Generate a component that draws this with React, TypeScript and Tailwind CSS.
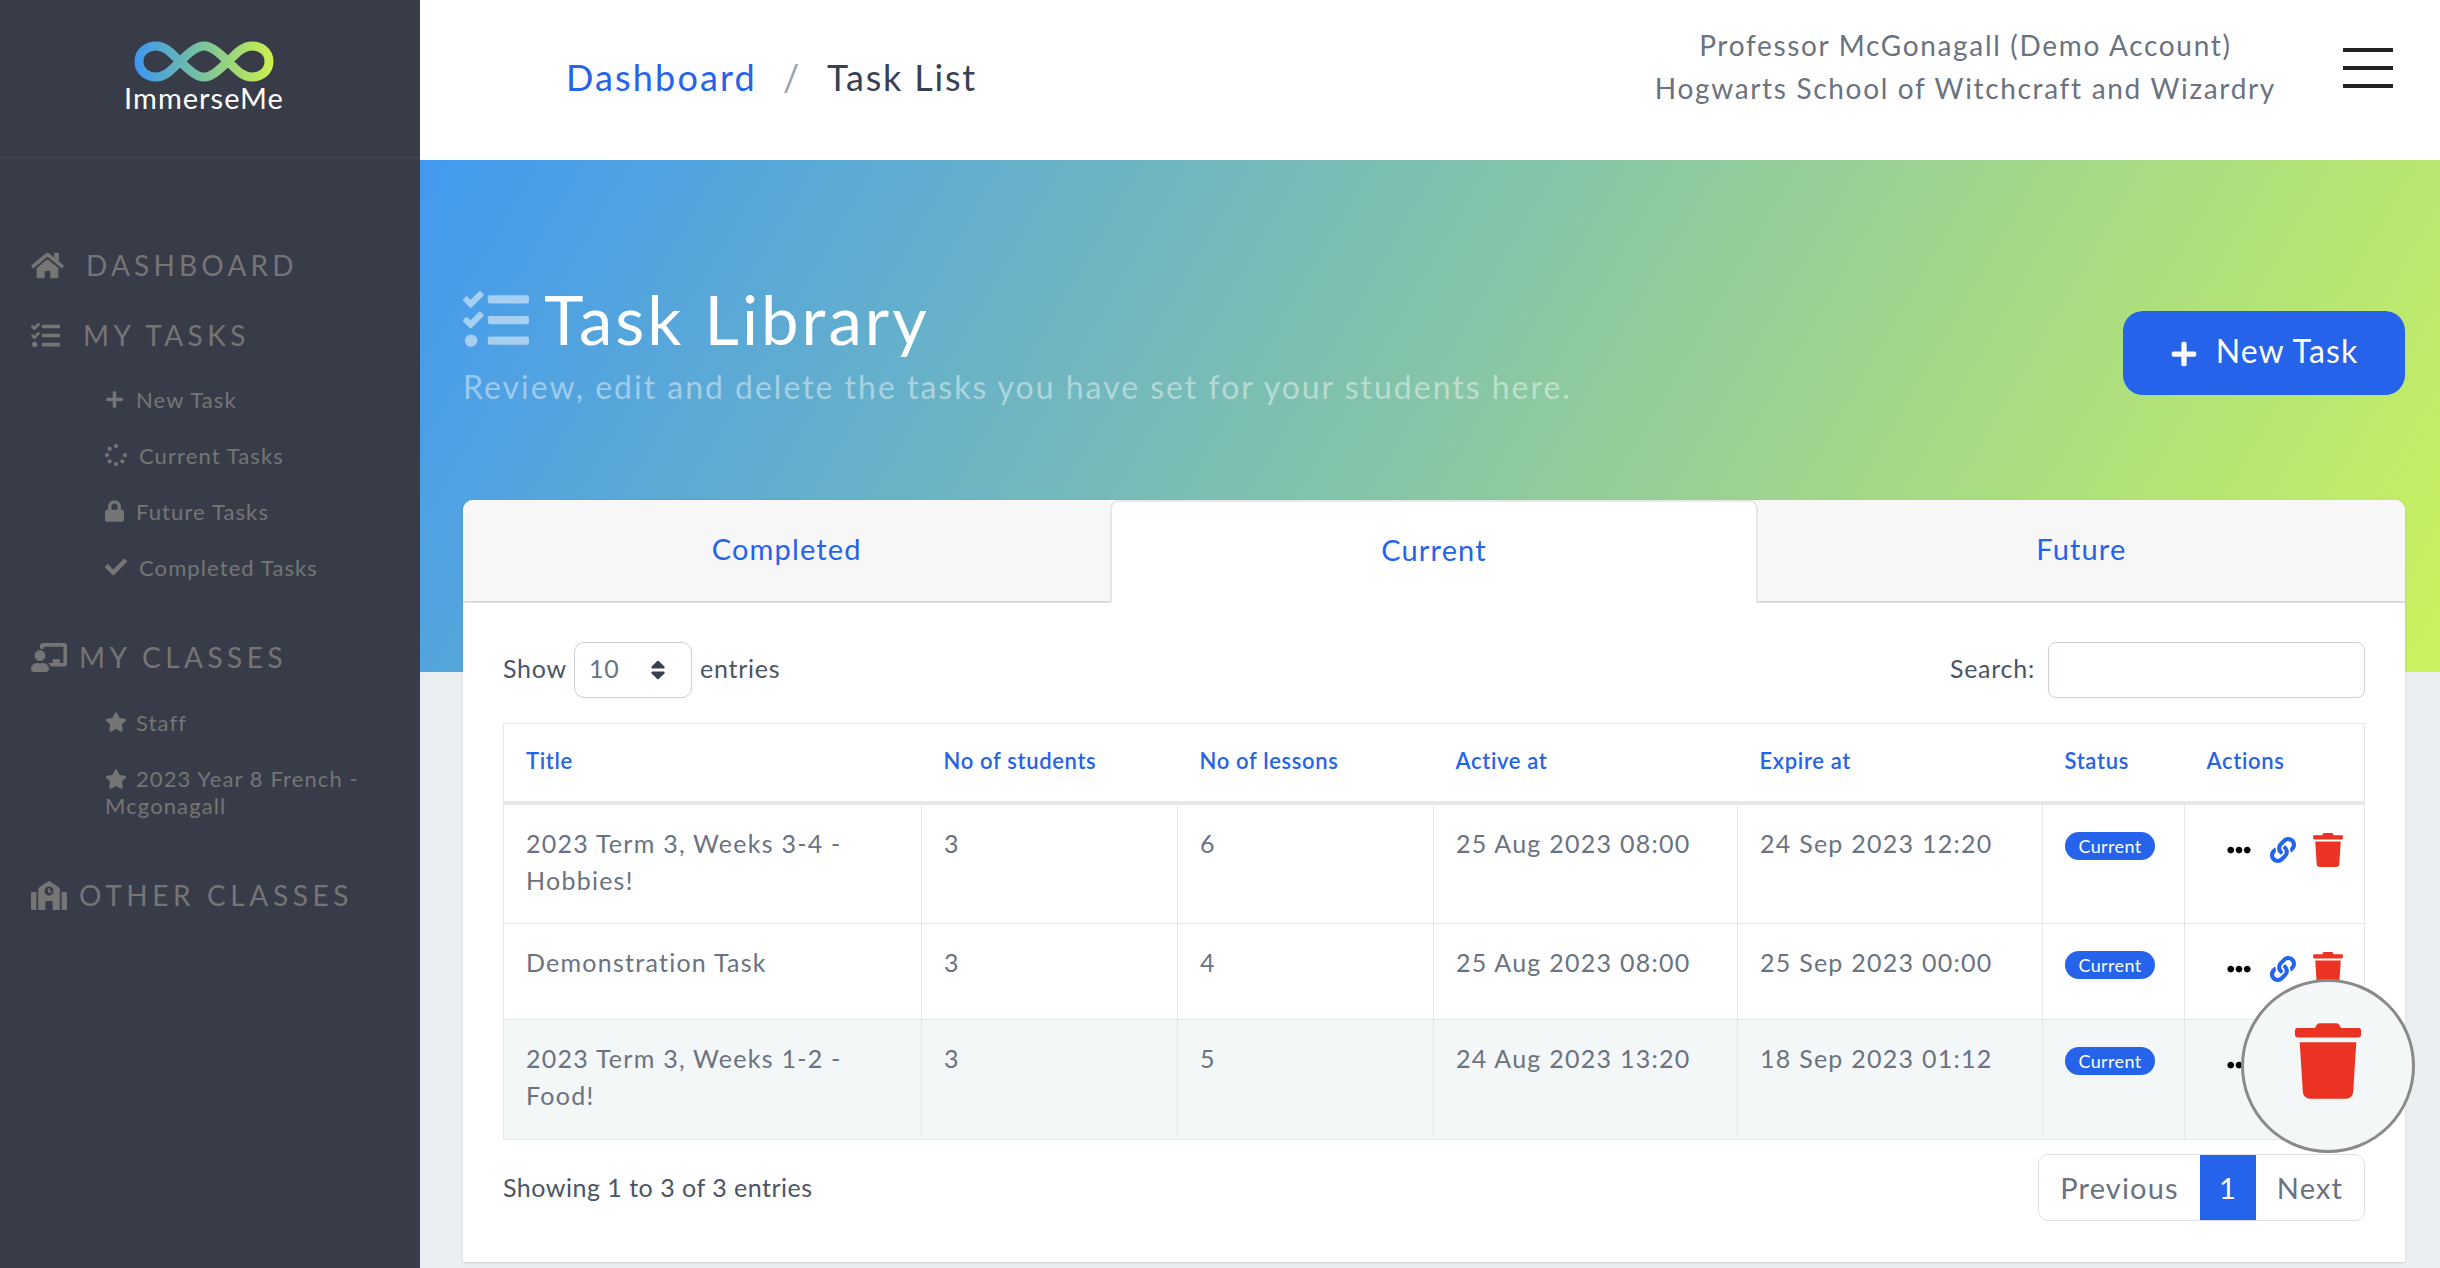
import { FaCheck, FaChalkboardTeacher, FaEllipsisH, FaHome, FaLink, FaLock, FaPlus, FaSchool, FaSort, FaSpinner, FaStar, FaTasks, FaTrash } from "react-icons/fa";

const rows = [
  { title: ["2023 Term 3, Weeks 3-4 -", "Hobbies!"], students: "3", lessons: "6", active: "25 Aug 2023 08:00", expire: "24 Sep 2023 12:20", height: "h-[121px]", bg: "" },
  { title: ["Demonstration Task"], students: "3", lessons: "4", active: "25 Aug 2023 08:00", expire: "25 Sep 2023 00:00", height: "h-[96px]", bg: "" },
  { title: ["2023 Term 3, Weeks 1-2 -", "Food!"], students: "3", lessons: "5", active: "24 Aug 2023 13:20", expire: "18 Sep 2023 01:12", height: "h-[120px]", bg: "bg-[#f4f7f8]" },
];

const columns = ["Title", "No of students", "No of lessons", "Active at", "Expire at", "Status", "Actions"];

function Logo() {
  return (
    <svg width="140" height="41" viewBox="0 0 140 41" fill="none">
      <defs>
        <linearGradient id="logoGrad" x1="0" y1="0" x2="140" y2="0" gradientUnits="userSpaceOnUse">
          <stop offset="0" stopColor="#3b96f2" />
          <stop offset="0.5" stopColor="#7cc49a" />
          <stop offset="1" stopColor="#cdf24a" />
        </linearGradient>
      </defs>
      <path
        d="M5 20.5C5 10 14 5 22 5C32 5 38 13 46 20.5C54 28 62 36 70 36C78 36 86 28 94 20.5C102 13 108 5 118 5C126 5 135 10 135 20.5C135 31 126 36 118 36C108 36 102 28 94 20.5C86 13 78 5 70 5C62 5 54 13 46 20.5C38 28 32 36 22 36C14 36 5 31 5 20.5Z"
        stroke="url(#logoGrad)"
        strokeWidth="9"
      />
    </svg>
  );
}

function Sidebar() {
  return (
    <aside className="w-[420px] shrink-0 bg-[#383c49] text-[#757575]">
      <div className="h-[158px] border-b border-[#42464f] flex flex-col items-center pt-[41px] pr-[12px]">
        <Logo />
        <span className="text-white text-[29px] leading-[32px] tracking-[0.035em]">ImmerseMe</span>
      </div>
      <nav className="pt-[72px]">
        <div className="h-[70px] flex items-center pl-[31px] gap-[22px] text-[28px] tracking-[0.15em]">
          <FaHome className="w-[33px] h-[29px]" />
          DASHBOARD
        </div>
        <div className="h-[70px] flex items-center pl-[31px] gap-[23px] text-[28px] tracking-[0.16em]">
          <FaTasks className="w-[29px] h-[29px]" />
          MY TASKS
        </div>
        <div className="pt-[1px] text-[22px] tracking-[0.05em]">
          <div className="h-[56px] flex items-center pl-[105px] gap-[12px]"><FaPlus className="w-[19px] h-[19px]" />New Task</div>
          <div className="h-[56px] flex items-center pl-[105px] gap-[12px]"><FaSpinner className="w-[22px] h-[22px]" />Current Tasks</div>
          <div className="h-[56px] flex items-center pl-[105px] gap-[12px]"><FaLock className="w-[19px] h-[22px]" />Future Tasks</div>
          <div className="h-[56px] flex items-center pl-[105px] gap-[12px]"><FaCheck className="w-[22px] h-[22px]" />Completed Tasks</div>
        </div>
        <div className="mt-[27px] h-[70px] flex items-center pl-[31px] gap-[12px] text-[28px] tracking-[0.16em]">
          <FaChalkboardTeacher className="w-[36px] h-[29px]" />
          MY CLASSES
        </div>
        <div className="pt-[2px] text-[22px] tracking-[0.05em]">
          <div className="h-[56px] flex items-center pl-[105px] gap-[9px]"><FaStar className="w-[22px] h-[20px]" />Staff</div>
          <div className="pt-[15px] pl-[105px] pr-[40px] leading-[27px]">
            <FaStar className="inline w-[22px] h-[20px] mr-[9px] align-[-2px]" />
            2023 Year 8 French - Mcgonagall
          </div>
        </div>
        <div className="mt-[41px] h-[70px] flex items-center pl-[31px] gap-[12px] text-[28px] tracking-[0.165em]">
          <FaSchool className="w-[36px] h-[29px]" />
          OTHER CLASSES
        </div>
      </nav>
    </aside>
  );
}

function Header() {
  return (
    <header className="h-[160px] shrink-0 bg-white flex items-center pl-[146px] pr-[48px]">
      <div className="flex items-center text-[36px] tracking-[0.05em] -mt-[7px]">
        <span className="text-[#2563eb] tracking-[0.06em]">Dashboard</span>
        <span className="text-[#9ca3af] mx-[26px]">/</span>
        <span className="text-[#374151]">Task List</span>
      </div>
      <div className="ml-auto text-center text-[#6b7280] text-[28px] leading-[43px] tracking-[0.06em] -mt-[26px]">
        <div>Professor McGonagall (Demo Account)</div>
        <div>Hogwarts School of Witchcraft and Wizardry</div>
      </div>
      <div className="ml-[67px] w-[50px] flex flex-col gap-[14px] -mt-[24px]">
        <div className="h-[4px] bg-[#222]" />
        <div className="h-[4px] bg-[#222]" />
        <div className="h-[4px] bg-[#222]" />
      </div>
    </header>
  );
}

function Hero() {
  return (
    <section className="h-[512px] shrink-0 bg-[linear-gradient(120deg,#4299f0,#cbf25e)] pl-[43px] pr-[36px] flex items-start">
      <div className="pt-[122px]">
        <div className="flex items-center gap-[15px] h-[76px]">
          <FaTasks className="w-[66px] h-[66px] text-white/50" />
          <h1 className="text-white text-[67px] leading-[76px] tracking-[0.045em] -mt-[2px]">Task Library</h1>
        </div>
        <p className="text-white/45 text-[32px] leading-[40px] tracking-[0.062em] mt-[9px]">
          Review, edit and delete the tasks you have set for your students here.
        </p>
      </div>
      <button className="ml-auto mt-[151px] w-[282px] h-[84px] pb-[5px] rounded-[20px] bg-[#2563eb] text-white text-[32px] tracking-[0.035em] flex items-center justify-center gap-[18px]">
        <FaPlus className="w-[28px] h-[28px] mt-[7px]" />
        New Task
      </button>
    </section>
  );
}

function TaskTable() {
  return (
    <table className="w-[1861px] table-fixed border-collapse border border-[#e5e7eb] mt-[25px]">
      <colgroup>
        <col className="w-[418px]" />
        <col className="w-[256px]" />
        <col className="w-[256px]" />
        <col className="w-[304px]" />
        <col className="w-[305px]" />
        <col className="w-[142px]" />
        <col className="w-[180px]" />
      </colgroup>
      <thead>
        <tr className="h-[79px] border-b-[4px] border-[#e5e7eb]">
          {columns.map((c) => (
            <th key={c} className="text-left pl-[22px] pb-[3px] text-[#2563eb] text-[22px] font-semibold tracking-[0.03em]">{c}</th>
          ))}
        </tr>
      </thead>
      <tbody>
        {rows.map((r) => (
          <tr key={r.title[0]} className={`${r.height} ${r.bg} align-top text-[#6b7280] text-[25px] leading-[37px] tracking-[0.05em]`}>
            <td className="pl-[22px] pt-[20px] border border-[#e5e7eb]">
              {r.title.map((t) => <div key={t}>{t}</div>)}
            </td>
            <td className="pl-[22px] pt-[20px] border border-[#e5e7eb]">{r.students}</td>
            <td className="pl-[22px] pt-[20px] border border-[#e5e7eb]">{r.lessons}</td>
            <td className="pl-[22px] pt-[20px] border border-[#e5e7eb]">{r.active}</td>
            <td className="pl-[22px] pt-[20px] border border-[#e5e7eb]">{r.expire}</td>
            <td className="pl-[22px] pt-[27px] border border-[#e5e7eb]">
              <span className="block w-[90px] h-[28px] rounded-full bg-[#2563eb] text-white text-[18px] leading-[28px] text-center tracking-[0.02em]">Current</span>
            </td>
            <td className="pt-[28px] border border-[#e5e7eb]">
              <div className="flex items-center pl-[42px]">
                <FaEllipsisH className="w-[24px] h-[24px] text-black" />
                <FaLink className="ml-[19px] w-[26px] h-[26px] text-[#2563eb]" />
                <FaTrash className="ml-[17px] w-[30px] h-[34px] text-[#ea3323]" />
              </div>
            </td>
          </tr>
        ))}
      </tbody>
    </table>
  );
}

export default function App() {
  return (
    <div className="h-screen flex overflow-hidden bg-[#eceff1] font-['Lato','Open_Sans',sans-serif]">
      <Sidebar />
      <main className="relative flex-1 flex flex-col">
        <Header />
        <Hero />
        <div className="-mt-[172px] ml-[43px] mr-[36px] h-[762px] bg-white rounded-t-[10px] shadow-sm">
          <div className="grid grid-cols-3 h-[103px] text-[#2563eb] text-[29px] tracking-[0.04em]">
            <div className="bg-[#f7f7f7] rounded-tl-[10px] border-b-2 border-[#dcdde3] pb-[3px] flex items-center justify-center">Completed</div>
            <div className="bg-white rounded-t-[8px] border-x-2 border-t-2 border-[#e7e7ea] pb-[5px] flex items-center justify-center">Current</div>
            <div className="bg-[#f7f7f7] rounded-tr-[10px] border-b-2 border-[#dcdde3] pb-[3px] flex items-center justify-center">Future</div>
          </div>
          <div className="px-[40px] pt-[39px]">
            <div className="flex items-center h-[56px] text-[#4b5563] text-[25px] tracking-[0.03em]">
              <span className="-mt-[2px]">Show</span>
              <div className="ml-[7px] mr-[8px] w-[118px] h-[56px] rounded-[10px] border border-[#cbd0dc] flex items-center pl-[14px] pr-[24px] justify-between text-[#6b7280]">
                <span className="-mt-[2px]">10</span>
                <FaSort className="w-[18px] h-[24px] text-[#374151]" />
              </div>
              <span className="-mt-[2px]">entries</span>
              <span className="ml-auto mr-[13px] -mt-[2px]">Search:</span>
              <div className="w-[317px] h-[56px] rounded-[8px] border border-[#cbd0dc]" />
            </div>
            <TaskTable />
            <div className="flex items-center mt-[14px] text-[25px] tracking-[0.02em]">
              <span className="text-[#4b5563]">Showing 1 to 3 of 3 entries</span>
              <div className="ml-auto h-[67px] flex border border-[#dfe1e6] rounded-[10px] overflow-hidden text-[#6b7280] text-[29px] tracking-[0.04em]">
                <span className="w-[161px] flex items-center justify-center">Previous</span>
                <span className="w-[56px] flex items-center justify-center bg-[#2563eb] text-white">1</span>
                <span className="w-[108px] flex items-center justify-center">Next</span>
              </div>
            </div>
          </div>
        </div>
        {/* magnifier over the delete icon of the last row */}
        <div className="absolute left-[1821px] top-[979px] w-[174px] h-[174px] rounded-full border-[3px] border-[#8a8a8a] bg-[#f4f7f8] flex items-center justify-center">
          <FaTrash className="w-[66px] h-[76px] mb-[10px] text-[#ea3323]" />
        </div>
      </main>
    </div>
  );
}
